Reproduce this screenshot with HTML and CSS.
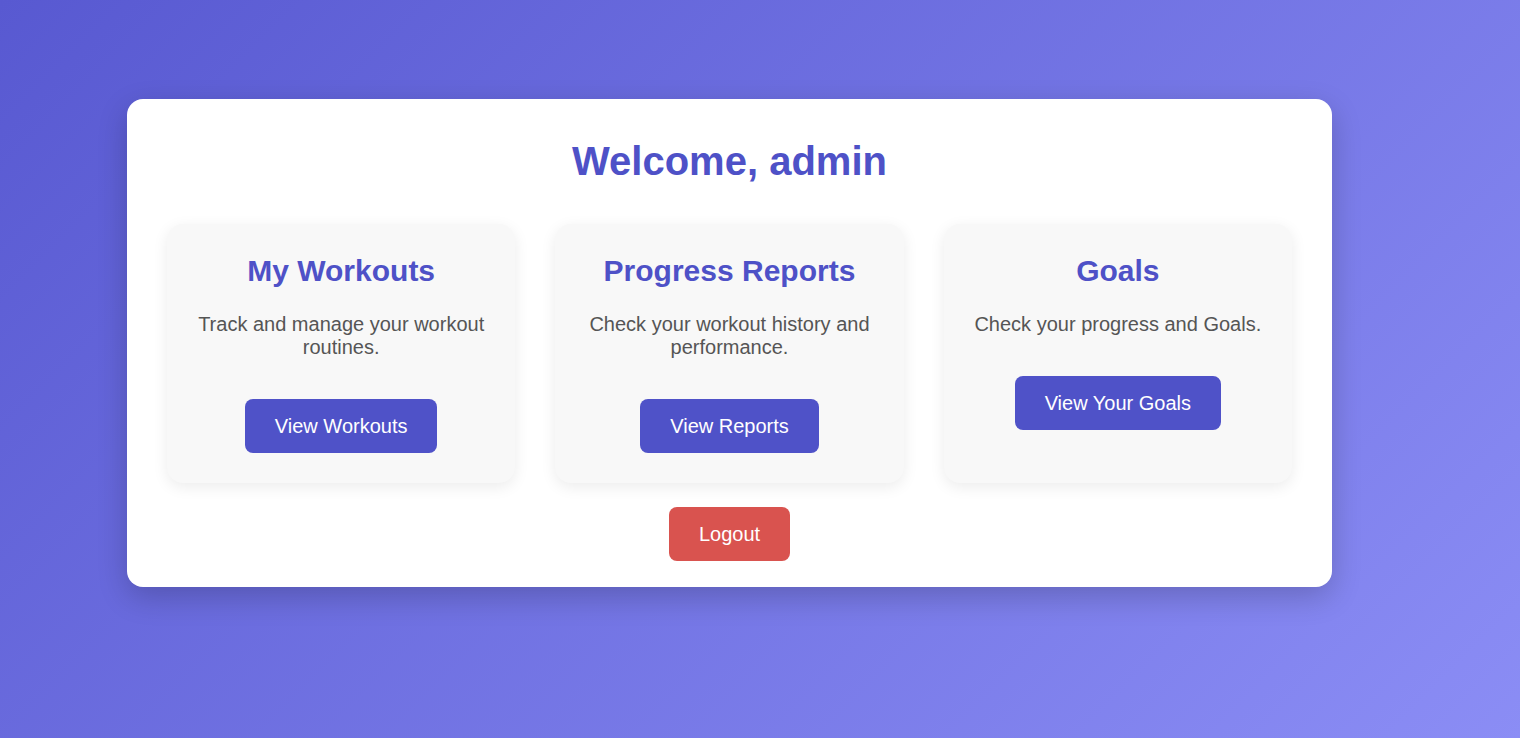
FILE: index.html
```html
<!DOCTYPE html>
<html lang="en">
<head>
<meta charset="utf-8">
<title>Dashboard</title>
<link rel="stylesheet" href="styles.css">
</head>
<body>
<main class="dashboard">
  <h1 class="welcome">Welcome, admin</h1>
  <section class="cards">
    <div class="card">
      <h3 class="card-title">My Workouts</h3>
      <p class="card-text">Track and manage your workout routines.</p>
      <a class="btn" href="#">View Workouts</a>
    </div>
    <div class="card">
      <h3 class="card-title">Progress Reports</h3>
      <p class="card-text">Check your workout history and performance.</p>
      <a class="btn" href="#">View Reports</a>
    </div>
    <div class="card">
      <h3 class="card-title">Goals</h3>
      <p class="card-text">Check your progress and Goals.</p>
      <a class="btn" href="#">View Your Goals</a>
    </div>
  </section>
  <div class="logout-row">
    <a class="btn btn-logout" href="#">Logout</a>
  </div>
</main>
</body>
</html>
```

FILE: styles.css
```css
html, body {
  margin: 0;
  padding: 0;
}

body {
  min-height: 100vh;
  background: linear-gradient(135deg, #5859d1 0%, #8b8df5 100%);
  font-family: "Liberation Sans", Arial, sans-serif;
  overflow: hidden;
}

.dashboard {
  box-sizing: border-box;
  width: 1205px;
  margin: 99px 0 0 127px;
  padding: 39px 40px 26px;
  background: #ffffff;
  border-radius: 16px;
  box-shadow: 0 10px 30px rgba(0, 0, 0, 0.2);
}

.welcome {
  margin: 0 0 40px;
  text-align: center;
  font-size: 40px;
  font-weight: bold;
  color: #4e51c7;
  line-height: 46px;
}

.cards {
  display: grid;
  grid-template-columns: repeat(3, 1fr);
  gap: 40px;
}

.card {
  display: flex;
  flex-direction: column;
  align-items: center;
  padding: 29px 25px 30px;
  background: #f8f8f8;
  border-radius: 16px;
  box-shadow: 0 4px 15px rgba(0, 0, 0, 0.08);
  text-align: center;
}

.card-title {
  margin: 0 0 25px;
  font-size: 30px;
  line-height: 35px;
  font-weight: bold;
  color: #4e51c7;
}

.card-text {
  margin: 0 0 40px;
  font-size: 20px;
  line-height: 23px;
  color: #555555;
}

.btn {
  display: inline-block;
  padding: 16px 30px;
  font-size: 20px;
  line-height: 22px;
  color: #ffffff;
  background: #4f52c8;
  border-radius: 8px;
  text-decoration: none;
}

.logout-row {
  display: flex;
  justify-content: center;
  margin-top: 24px;
}

.btn-logout {
  background: #d9534f;
}
```
